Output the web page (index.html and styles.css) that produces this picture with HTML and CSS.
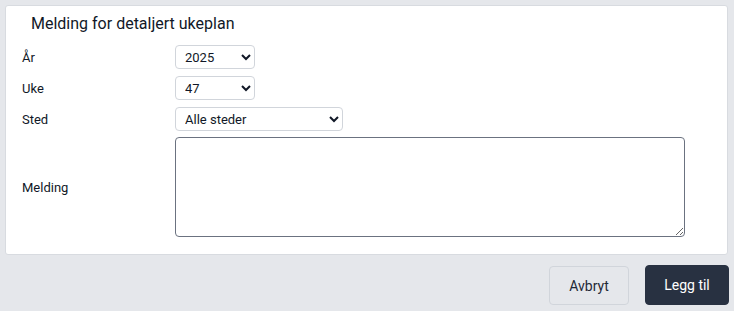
FILE: index.html
```html
<!DOCTYPE html>
<html lang="no">
<head>
<meta charset="utf-8">
<title>Melding for detaljert ukeplan</title>
<link rel="stylesheet" href="styles.css">
</head>
<body>
<div class="card">
  <h2 class="title">Melding for detaljert ukeplan</h2>
  <div class="form">
    <label class="label" for="aar">År</label>
    <div class="field"><select id="aar" class="select small"><option>2025</option></select></div>
    <label class="label" for="uke">Uke</label>
    <div class="field"><select id="uke" class="select small"><option>47</option></select></div>
    <label class="label" for="sted">Sted</label>
    <div class="field"><select id="sted" class="select wide"><option>Alle steder</option></select></div>
    <label class="label" for="melding">Melding</label>
    <div class="field"><textarea id="melding" class="textarea"></textarea></div>
  </div>
</div>
<div class="actions">
  <button class="btn btn-secondary">Avbryt</button>
  <button class="btn btn-primary">Legg til</button>
</div>
</body>
</html>
```
FILE: styles.css
```css
html, body {
  margin: 0;
  padding: 0;
  background: #e5e7eb;
  font-family: Roboto, "Liberation Sans", sans-serif;
  color: #111827;
}
.card {
  margin: 5px 6px 0 5px;
  background: #ffffff;
  border: 1px solid #d8dbe0;
  border-radius: 3px;
  padding: 8px 16px 17px 16px;
  height: 250px;
  box-sizing: border-box;
}
.title {
  margin: 0 0 0 9px;
  font-size: 16px;
  font-weight: 400;
  line-height: 19px;
  color: #111827;
}
.form {
  margin-top: 12px;
  display: grid;
  grid-template-columns: 153px 1fr;
  row-gap: 7px;
  align-items: center;
}
.label {
  font-size: 13px;
  color: #111827;
}
.field {
  display: flex;
}
.select {
  font-family: Roboto, "Liberation Sans", sans-serif;
  font-size: 13px;
  color: #111827;
  height: 24px;
  border: 1px solid #d1d5db;
  border-radius: 4px;
  background: #ffffff;
  padding: 0 4px 0 5px;
  box-sizing: border-box;
}
.small { width: 80px; }
.wide { width: 168px; }
.textarea {
  width: 510px;
  height: 100px;
  border: 1px solid #6b7280;
  border-radius: 4px;
  box-sizing: border-box;
  margin-top: -1px;
}
.actions {
  display: flex;
  justify-content: flex-end;
  gap: 16px;
  margin: 10px 5px 0 0;
  align-items: flex-start;
}
.btn {
  font-family: Roboto, "Liberation Sans", sans-serif;
  font-size: 14px;
  border-radius: 4px;
  height: 40px;
  box-sizing: border-box;
  padding: 0;
}
.btn-secondary {
  width: 80px;
  margin-top: 1px;
  height: 39px;
  background: #e5e7eb;
  border: 1px solid #d1d5db;
  color: #1f2937;
}
.btn-primary {
  width: 84px;
  background: #283141;
  border: 1px solid #283141;
  color: #ffffff;
}
```
